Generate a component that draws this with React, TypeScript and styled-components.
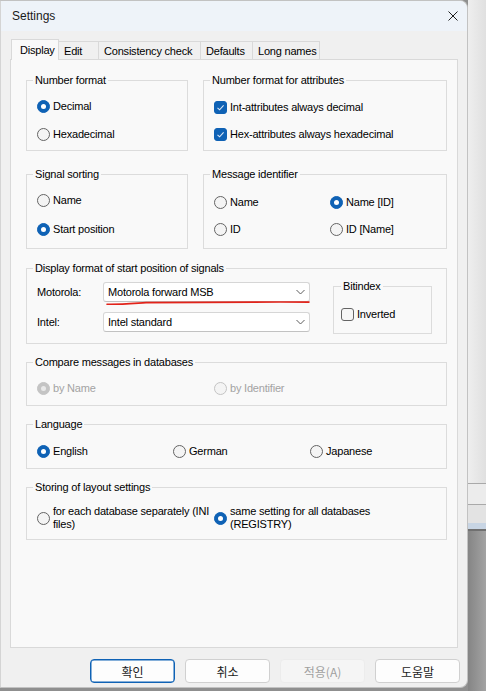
import styled, { createGlobalStyle } from 'styled-components';

const GlobalStyle = createGlobalStyle`
  html, body {
    margin: 0;
    padding: 0;
  }
  body {
    width: 486px;
    height: 691px;
    overflow: hidden;
    background: #8f8f8f;
    font-family: "Liberation Sans", Arial, sans-serif;
    font-size: 11px;
    letter-spacing: -0.2px;
    color: #000;
  }
`;

const Screen = styled.div`
  display: flex;
  width: 486px;
  height: 691px;
`;

const Dialog = styled.div`
  flex: none;
  width: 468px;
  height: 688px;
  box-sizing: border-box;
  background: #f0f0f0;
  border: 1px solid #c2c2c2;
  border-left-color: #d4d4d4;
  border-radius: 0 8px 8px 0;
  display: flex;
  flex-direction: column;
  overflow: hidden;
`;

const TitleBar = styled.div`
  height: 30px;
  flex: none;
  display: flex;
  align-items: center;
  justify-content: space-between;
  padding: 0 9px 0 11px;
  background: #eef3f9;
`;

const Title = styled.span`
  font-size: 12px;
  letter-spacing: 0;
  color: #1a1a1a;
`;

const Body = styled.div`
  flex: 1;
  display: flex;
  flex-direction: column;
  padding: 8px 9px 0 9px;
`;

const TabStrip = styled.div`
  position: relative;
  z-index: 1;
  display: flex;
  align-items: flex-end;
  height: 21px;
  margin: 0 0 -1px 1px;
`;

const Tab = styled.div<{ $selected?: boolean; $width: number }>`
  box-sizing: border-box;
  width: ${(p) => p.$width}px;
  height: ${(p) => (p.$selected ? 21 : 18)}px;
  margin-bottom: ${(p) => (p.$selected ? 0 : 1)}px;
  margin-left: -1px;
  padding-left: ${(p) => (p.$selected ? 8 : 5)}px;
  display: flex;
  align-items: center;
  border: 1px solid #d9d9d9;
  border-bottom: none;
  background: ${(p) => (p.$selected ? '#f9f9f9' : '#f0f0f0')};
  white-space: nowrap;
  &:first-child {
    margin-left: 0;
  }
`;

const Panel = styled.div`
  box-sizing: border-box;
  height: 589px;
  background: #f9f9f9;
  border: 1px solid #d9d9d9;
  padding: 20px 10px 0 15px;
  display: flex;
  flex-direction: column;
  gap: 18px;
`;

const GroupRow = styled.div`
  display: flex;
  gap: 15px;
  margin-bottom: 1px;
  &:first-child {
    margin-bottom: 5px;
  }
`;

const Group = styled.div<{ $height: number; $width?: number; $grow?: boolean; $pad: string }>`
  position: relative;
  box-sizing: border-box;
  flex: ${(p) => (p.$grow ? '1' : 'none')};
  width: ${(p) => (p.$width ? `${p.$width}px` : 'auto')};
  height: ${(p) => p.$height}px;
  border: 1px solid #dcdcdc;
  padding: ${(p) => p.$pad};
`;

const Legend = styled.span<{ $left?: number }>`
  position: absolute;
  top: -7px;
  left: ${(p) => p.$left ?? 6}px;
  padding: 0 2px;
  line-height: 13px;
  background: #f9f9f9;
  white-space: nowrap;
`;

const OptionGrid = styled.div<{ $cols: string; $rowGap?: number }>`
  display: grid;
  grid-template-columns: ${(p) => p.$cols};
  row-gap: ${(p) => p.$rowGap ?? 12}px;
`;

const Option = styled.label<{ $disabled?: boolean }>`
  display: flex;
  align-items: center;
  gap: 3px;
  min-height: 16px;
  line-height: 13px;
  white-space: nowrap;
  color: ${(p) => (p.$disabled ? '#a3a3a3' : '#000')};
`;

const RadioCircle = styled.span<{ $checked?: boolean; $disabled?: boolean }>`
  flex: none;
  box-sizing: border-box;
  width: 13px;
  height: 13px;
  border-radius: 50%;
  border: 1px solid
    ${(p) => (p.$disabled ? '#c4c4c4' : p.$checked ? '#0f62b5' : '#646464')};
  background: ${(p) =>
    p.$checked ? (p.$disabled ? '#c4c4c4' : '#0f62b5') : '#f4f4f4'};
  display: flex;
  align-items: center;
  justify-content: center;
  &::after {
    content: '';
    display: ${(p) => (p.$checked ? 'block' : 'none')};
    width: 5px;
    height: 5px;
    border-radius: 50%;
    background: ${(p) => (p.$disabled ? '#e9e9e9' : '#fff')};
  }
`;

const CheckSquare = styled.span<{ $checked?: boolean }>`
  flex: none;
  box-sizing: border-box;
  width: 13px;
  height: 13px;
  border-radius: 3px;
  border: 1px solid ${(p) => (p.$checked ? '#0f62b5' : '#646464')};
  background: ${(p) => (p.$checked ? '#0f62b5' : '#f6f6f6')};
  display: flex;
  align-items: center;
  justify-content: center;
`;

const DisplayGrid = styled.div`
  display: grid;
  grid-template-columns: 66px 207px auto;
  grid-template-rows: 20px 20px;
  row-gap: 10px;
  align-items: center;
`;

const ComboBox = styled.div`
  position: relative;
  box-sizing: border-box;
  height: 20px;
  display: flex;
  align-items: center;
  justify-content: space-between;
  padding: 0 4px 0 4px;
  background: #fff;
  border: 1px solid #d6d6d6;
  border-bottom-color: #c2c2c2;
  border-radius: 3px;
`;

const Scribble = styled.svg`
  position: absolute;
  left: 2px;
  top: 16px;
  pointer-events: none;
`;

const BitBox = styled.div`
  grid-column: 3;
  grid-row: 1 / span 2;
  align-self: start;
  position: relative;
  box-sizing: border-box;
  width: 99px;
  height: 48px;
  margin: 4px 0 0 23px;
  border: 1px solid #dcdcdc;
  padding: 19px 0 0 7px;
`;

const Footer = styled.div`
  display: flex;
  justify-content: flex-end;
  gap: 10px;
  margin: 11px -2px 0 0;
`;

const Button = styled.div<{ $primary?: boolean; $disabled?: boolean }>`
  box-sizing: border-box;
  width: 85px;
  height: 24px;
  display: flex;
  align-items: center;
  justify-content: center;
  border-radius: 4px;
  font-family: "Noto Sans CJK KR", "Liberation Sans", sans-serif;
  font-size: 12px;
  letter-spacing: 0;
  color: ${(p) => (p.$disabled ? '#a0a0a0' : '#1b1b1b')};
  background: ${(p) => (p.$disabled ? '#f5f5f5' : '#fdfdfd')};
  border: 1px solid
    ${(p) => (p.$primary ? '#0f62b5' : p.$disabled ? '#ececec' : '#d0d0d0')};
  box-shadow: ${(p) => (p.$primary ? 'inset 0 0 0 0.5px #0f62b5' : 'none')};
`;

const Backdrop = styled.div`
  flex: 1;
  display: flex;
  flex-direction: column;
`;

const Strip = styled.div<{ $h?: number; $bg: string }>`
  flex: ${(p) => (p.$h ? 'none' : '1')};
  height: ${(p) => (p.$h ? `${p.$h}px` : 'auto')};
  background: ${(p) => p.$bg};
`;

function Radio({
  label,
  checked,
  disabled,
}: {
  label: React.ReactNode;
  checked?: boolean;
  disabled?: boolean;
}) {
  return (
    <Option $disabled={disabled}>
      <RadioCircle $checked={checked} $disabled={disabled} />
      <span>{label}</span>
    </Option>
  );
}

function Check({ label, checked }: { label: string; checked?: boolean }) {
  return (
    <Option>
      <CheckSquare $checked={checked}>
        {checked && (
          <svg width="9" height="9" viewBox="0 0 9 9">
            <polyline
              points="1.5,4.8 3.6,6.8 7.6,2.4"
              fill="none"
              stroke="#dbe8f7"
              strokeWidth="1.1"
            />
          </svg>
        )}
      </CheckSquare>
      <span>{label}</span>
    </Option>
  );
}

function Chevron() {
  return (
    <svg width="9" height="6" viewBox="0 0 9 6">
      <polyline
        points="0.5,1 4.5,5 8.5,1"
        fill="none"
        stroke="#5c5c5c"
        strokeWidth="1"
      />
    </svg>
  );
}

const tabs = [
  { name: 'Display', width: 48 },
  { name: 'Edit', width: 41 },
  { name: 'Consistency check', width: 103 },
  { name: 'Defaults', width: 53 },
  { name: 'Long names', width: 68 },
];

const strips: { h?: number; bg: string }[] = [
  { h: 483, bg: 'linear-gradient(to right, #eeeeee, #e0e0e0)' },
  { h: 1, bg: '#a9a9a9' },
  { h: 20, bg: '#ececec' },
  { h: 1, bg: '#a9a9a9' },
  { h: 18, bg: '#e3e3e3' },
  { h: 6, bg: '#c8d5e4' },
  { h: 2, bg: '#707070' },
  { bg: 'linear-gradient(to right, #858585, #a3a3a3)' },
];

export default function App() {
  return (
    <>
      <GlobalStyle />
      <Screen>
        <Dialog>
          <TitleBar>
            <Title>Settings</Title>
            <svg width="10" height="10" viewBox="0 0 10 10">
              <path d="M0.5 0.5 L9.5 9.5 M9.5 0.5 L0.5 9.5" stroke="#1f1f1f" strokeWidth="1" />
            </svg>
          </TitleBar>
          <Body>
            <TabStrip>
              {tabs.map((t, i) => (
                <Tab key={t.name} $width={t.width} $selected={i === 0}>
                  {t.name}
                </Tab>
              ))}
            </TabStrip>
            <Panel>
              <GroupRow>
                <Group $width={162} $height={71} $pad="17px 0 0 10px">
                  <Legend>Number format</Legend>
                  <OptionGrid $cols="auto">
                    <Radio label="Decimal" checked />
                    <Radio label="Hexadecimal" />
                  </OptionGrid>
                </Group>
                <Group $grow $height={71} $pad="18px 0 0 10px">
                  <Legend>Number format for attributes</Legend>
                  <OptionGrid $cols="auto" $rowGap={11}>
                    <Check label="Int-attributes always decimal" checked />
                    <Check label="Hex-attributes always hexadecimal" checked />
                  </OptionGrid>
                </Group>
              </GroupRow>
              <GroupRow>
                <Group $width={162} $height={75} $pad="17px 0 0 10px">
                  <Legend>Signal sorting</Legend>
                  <OptionGrid $cols="auto" $rowGap={13}>
                    <Radio label="Name" />
                    <Radio label="Start position" checked />
                  </OptionGrid>
                </Group>
                <Group $grow $height={75} $pad="19px 0 0 10px">
                  <Legend>Message identifier</Legend>
                  <OptionGrid $cols="116px auto" $rowGap={11}>
                    <Radio label="Name" />
                    <Radio label="Name [ID]" checked />
                    <Radio label="ID" />
                    <Radio label="ID [Name]" />
                  </OptionGrid>
                </Group>
              </GroupRow>
              <Group $height={76} $pad="13px 0 0 10px">
                <Legend>Display format of start position of signals</Legend>
                <DisplayGrid>
                  <span>Motorola:</span>
                  <ComboBox>
                    <span>Motorola forward MSB</span>
                    <Chevron />
                    <Scribble width="204" height="7" viewBox="0 0 204 7">
                      <path
                        d="M1 5.2 C 12 5.6, 24 4.6, 40 3.6 C 70 3, 140 3, 203 3.1"
                        fill="none"
                        stroke="#e2231a"
                        strokeWidth="1.6"
                        strokeLinecap="round"
                      />
                    </Scribble>
                  </ComboBox>
                  <BitBox>
                    <Legend $left={7}>Bitindex</Legend>
                    <Check label="Inverted" />
                  </BitBox>
                  <span>Intel:</span>
                  <ComboBox>
                    <span>Intel standard</span>
                    <Chevron />
                  </ComboBox>
                </DisplayGrid>
              </Group>
              <Group $height={44} $pad="17px 0 0 10px">
                <Legend>Compare messages in databases</Legend>
                <OptionGrid $cols="177px auto">
                  <Radio label="by Name" checked disabled />
                  <Radio label="by Identifier" disabled />
                </OptionGrid>
              </Group>
              <Group $height={45} $pad="18px 0 0 10px">
                <Legend>Language</Legend>
                <OptionGrid $cols="136px 137px auto">
                  <Radio label="English" checked />
                  <Radio label="German" />
                  <Radio label="Japanese" />
                </OptionGrid>
              </Group>
              <Group $height={53} $pad="17px 0 0 10px">
                <Legend>Storing of layout settings</Legend>
                <OptionGrid $cols="177px auto">
                  <Radio
                    label={
                      <>
                        for each database separately (INI
                        <br />
                        files)
                      </>
                    }
                  />
                  <Radio
                    checked
                    label={
                      <>
                        same setting for all databases
                        <br />
                        (REGISTRY)
                      </>
                    }
                  />
                </OptionGrid>
              </Group>
            </Panel>
            <Footer>
              <Button $primary>확인</Button>
              <Button>취소</Button>
              <Button $disabled>적용(A)</Button>
              <Button>도움말</Button>
            </Footer>
          </Body>
        </Dialog>
        <Backdrop>
          {strips.map((s, i) => (
            <Strip key={i} $h={s.h} $bg={s.bg} />
          ))}
        </Backdrop>
      </Screen>
    </>
  );
}
